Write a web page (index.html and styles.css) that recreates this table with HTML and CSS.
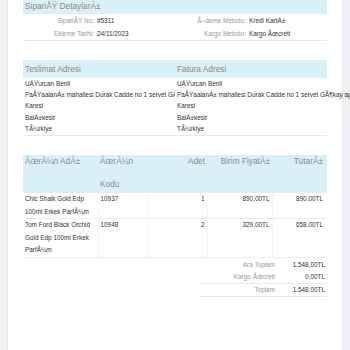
FILE: index.html
```html
<!DOCTYPE html>
<html>
<head>
<meta charset="utf-8">
<link rel="stylesheet" href="styles.css">
</head>
<body>
<div class="page">
  <div class="band band-top">SipariÅŸ DetaylarÄ±</div>
  <div class="info">
    <div class="info-col">
      <div class="info-row"><span class="lbl">SipariÅŸ No:</span><span class="val">#5311</span></div>
      <div class="info-row"><span class="lbl">Ekleme Tarihi:</span><span class="val">24/11/2023</span></div>
    </div>
    <div class="info-col">
      <div class="info-row"><span class="lbl">Ã–deme Metodu:</span><span class="val">Kredi KartÄ±</span></div>
      <div class="info-row"><span class="lbl">Kargo Metodu:</span><span class="val">Kargo Ãœcreti</span></div>
    </div>
  </div>

  <div class="addresses">
    <div class="addr">
      <div class="band band-addr">Teslimat Adresi</div>
      <div class="addr-body">
        <div class="line">UÄŸurcan Benli</div>
        <div class="line nowrap">PaÅŸaalanÄ± mahallesi Durak Cadde no 1 servet GÃ¶kay apt</div>
        <div class="line">Karesi</div>
        <div class="line">BalÄ±kesir</div>
        <div class="line">TÃ¼rkiye</div>
      </div>
    </div>
    <div class="addr">
      <div class="band band-addr">Fatura Adresi</div>
      <div class="addr-body">
        <div class="line">UÄŸurcan Benli</div>
        <div class="line nowrap">PaÅŸaalanÄ± mahallesi Durak Cadde no 1 servet GÃ¶kay apt</div>
        <div class="line">Karesi</div>
        <div class="line">BalÄ±kesir</div>
        <div class="line">TÃ¼rkiye</div>
      </div>
    </div>
  </div>

  <table class="items">
    <thead>
      <tr>
        <th class="c-name"><span class="th-in">ÃœrÃ¼n AdÄ±</span></th>
        <th class="c-code"><span class="th-in">ÃœrÃ¼n Kodu</span></th>
        <th class="c-num c-qty"><span class="th-in">Adet</span></th>
        <th class="c-num c-price"><span class="th-in">Birim FiyatÄ±</span></th>
        <th class="c-num c-total"><span class="th-in">TutarÄ±</span></th>
      </tr>
    </thead>
    <tbody>
      <tr>
        <td class="c-name">Chic Shaik Gold Edp 100ml Erkek ParfÃ¼m</td>
        <td class="c-code">10937</td>
        <td class="c-num">1</td>
        <td class="c-num">890,00TL</td>
        <td class="c-num">890,00TL</td>
      </tr>
      <tr>
        <td class="c-name">Tom Ford Black Orchid Gold Edp 100ml Erkek ParfÃ¼m</td>
        <td class="c-code">10948</td>
        <td class="c-num">2</td>
        <td class="c-num">329,00TL</td>
        <td class="c-num">658,00TL</td>
      </tr>
    </tbody>
  </table>

  <div class="totals">
    <div class="t-row"><span class="t-lbl">Ara Toplam</span><span class="t-val">1.548,00TL</span></div>
    <div class="t-row"><span class="t-lbl">Kargo Ãœcreti</span><span class="t-val">0,00TL</span></div>
    <div class="t-row t-line"><span class="t-lbl">Toplam</span><span class="t-val">1.548,00TL</span></div>
  </div>
</div>
</body>
</html>
```

FILE: styles.css
```css
html, body {
  margin: 0;
  padding: 0;
}
body {
  background: #f0f0f5;
  font-family: "Liberation Sans", Arial, sans-serif;
  font-size: 6.4px;
  color: #333;
  overflow: hidden;
}
.page {
  margin: 0 7px;
  background: #fff;
  border-left: 1px solid #e6e6ec;
  border-right: 1px solid #e6e6ec;
  min-height: 350px;
  padding: 0 15px 0 15px;
  box-sizing: border-box;
}
.band {
  background: #d9f0f8;
  color: #8a8a8a;
  padding-left: 2px;
}
.band-top {
  height: 14px;
  line-height: 12px;
  font-size: 8.3px;
}
.info {
  display: flex;
  border-bottom: 1px solid #e8e8e8;
}
.info-col {
  flex: 1;
}
.info-row {
  display: flex;
  line-height: 13px;
}
.lbl {
  width: 74px;
  text-align: right;
  color: #999;
  padding-right: 3px;
  box-sizing: border-box;
}
.val {
  color: #333;
}
.addresses {
  display: flex;
  margin-top: 19px;
}
.addr {
  flex: 1;
  min-width: 0;
  background: #fff;
  border-bottom: 1px solid #e8e8e8;
}
.band-addr {
  height: 18px;
  line-height: 19px;
  font-size: 8.3px;
}
.addr-body {
  padding: 0 0 1px 2px;
}
.line {
  line-height: 11.2px;
}
.nowrap {
  white-space: nowrap;
}
.items {
  margin-top: 19px;
  width: 100%;
  border-collapse: collapse;
  table-layout: fixed;
}
.items th {
  background: #d9f0f8;
  color: #8a8a8a;
  font-weight: normal;
  font-size: 8.3px;
  text-align: left;
  vertical-align: top;
  padding: 0 2px;
  height: 38px;
  box-sizing: border-box;
}
.items th.c-num {
  text-align: right;
}
.th-in {
  display: block;
  line-height: 23px;
  margin: -5px 0 -3px;
}
.items td {
  vertical-align: top;
  line-height: 12.5px;
  padding: 0 2px 0 2px;
  border-bottom: 1px solid #ececec;
  border-left: 1px solid #f6f6f6;
}
.items td:first-child {
  border-left: none;
}
.items .c-name { width: 75px; }
.items .c-code { width: 50px; }
.items .c-qty { width: 59px; }
.items .c-price { width: 65px; }
.items .c-num {
  text-align: right;
}
.items th.c-total,
.items td:last-child {
  padding-right: 4px;
}
.totals {
  margin-left: auto;
  width: 127px;
  margin-top: 1px;
}
.t-row {
  display: flex;
  line-height: 12px;
}
.t-line {
  border-top: 1px solid #e8e8e8;
  border-bottom: 1px solid #e8e8e8;
}
.t-lbl {
  flex: 1;
  text-align: right;
  color: #999;
  padding-right: 12px;
}
.t-val {
  width: 38px;
  text-align: right;
  padding-right: 2px;
}
```
